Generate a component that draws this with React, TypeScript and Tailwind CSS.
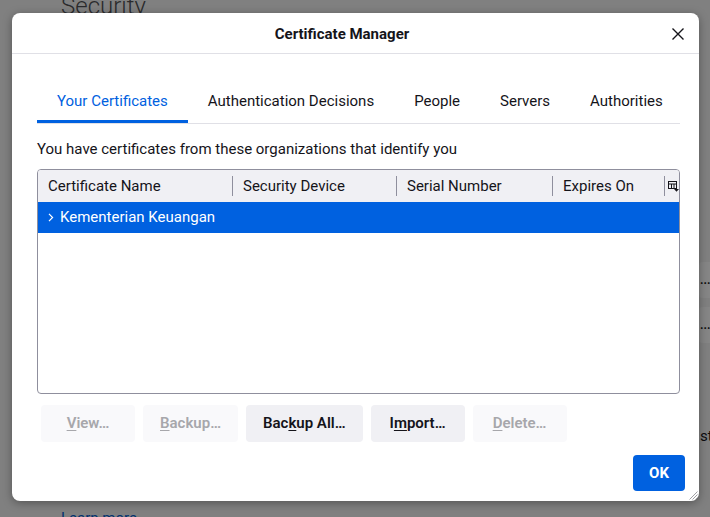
import { useState } from 'react'

const tabs = ['Your Certificates', 'Authentication Decisions', 'People', 'Servers', 'Authorities']

const columns = [
  { label: 'Certificate Name', width: 'w-[194px]' },
  { label: 'Security Device', width: 'w-[164px]' },
  { label: 'Serial Number', width: 'w-[156px]' },
  { label: 'Expires On', width: 'w-[112px]' },
]

function Key({ before, k, after }: { before: string; k: string; after: string }) {
  return (
    <span>
      {before}
      <span className="underline underline-offset-2">{k}</span>
      {after}
    </span>
  )
}

function ActionButton({ children, disabled }: { children: React.ReactNode; disabled?: boolean }) {
  return (
    <button
      disabled={disabled}
      className={
        disabled
          ? 'h-[37px] min-w-[94px] whitespace-nowrap rounded-[4px] bg-[#f9f9fb] px-[17px] text-[15px] font-semibold text-[#a7a7ab]'
          : 'h-[37px] min-w-[94px] whitespace-nowrap rounded-[4px] bg-[#f0f0f4] px-[17px] text-[15px] font-semibold text-[#15141a]'
      }
    >
      {children}
    </button>
  )
}

export default function App() {
  const [active, setActive] = useState(0)

  return (
    <div className="relative h-[517px] w-[710px] overflow-hidden bg-[#808080] font-['Roboto','Liberation_Sans',sans-serif] text-[#15141a]">
      {/* page behind the dialog */}
      <div className="flex flex-col pl-[61px]">
        <h2 className="-mt-[9px] text-[24px] font-light leading-[30px] text-[#2a2a2c]">Security</h2>
        <div className="mt-[241px] flex flex-col gap-[9px] pl-[638px]">
          <div className="flex h-[36px] w-[80px] items-center rounded-[4px] bg-[#868686] pl-[1px] text-[12px] font-bold leading-none text-[#101010]">...</div>
          <div className="flex h-[36px] w-[80px] items-center rounded-[4px] bg-[#868686] pl-[1px] text-[12px] font-bold leading-none text-[#101010]">...</div>
        </div>
        <div className="mt-[83px] pl-[639px] text-[15px] leading-[20px] text-[#0c0c0e]">st</div>
        <a className="mt-[62px] text-[15px] leading-[20px] text-[#00306f]">Learn more</a>
      </div>

      {/* dialog */}
      <div className="absolute left-[12px] top-[13px] flex h-[488px] w-[687px] flex-col rounded-[8px] bg-white shadow-[0_2px_10px_rgba(0,0,0,0.35)]">
        <div className="flex h-[41px] shrink-0 items-center border-b border-[#e0e0e6] pt-[2px]">
          <div className="flex-1 text-center text-[15px] font-bold">Certificate Manager</div>
          <button className="mr-[15px] flex h-[12px] w-[12px] items-center justify-center">
            <svg width="12" height="12" viewBox="0 0 12 12" fill="none" stroke="#15141a" strokeWidth="1.4">
              <path d="M0.5 0.5 L11.5 11.5 M11.5 0.5 L0.5 11.5" />
            </svg>
          </button>
        </div>

        <div className="flex flex-col pl-[25px] pr-[19px] pt-[27px]">
          <div className="flex border-b border-[#e0e0e6]">
            {tabs.map((t, i) => (
              <button
                key={t}
                onClick={() => setActive(i)}
                className={
                  i === active
                    ? 'h-[42px] shrink-0 whitespace-nowrap border-b-[3px] border-[#0061e0] px-[20px] pt-[2px] text-[15px] text-[#0061e0]'
                    : 'h-[42px] shrink-0 whitespace-nowrap border-b-[3px] border-transparent px-[20px] pt-[2px] text-[15px] text-[#15141a]'
                }
              >
                {t}
              </button>
            ))}
          </div>

          <p className="mt-[15px] text-[15px] leading-[20px]">You have certificates from these organizations that identify you</p>

          <div className="mt-[10px] h-[225px] overflow-hidden rounded-[4px] border border-[#8f8f9d]">
            <div className="flex h-[32px] items-center bg-[#f0f0f4]">
              {columns.map((c, i) => (
                <div key={c.label} className={`flex h-full shrink-0 items-center ${c.width}`}>
                  {i > 0 && <div className="mr-[10px] h-[20px] w-px bg-[#8f8f9d]" />}
                  <span className={i === 0 ? 'pl-[10px] text-[15px]' : 'text-[15px]'}>{c.label}</span>
                </div>
              ))}
              <div className="flex h-full flex-1 items-center">
                <div className="mr-[3px] h-[20px] w-px bg-[#8f8f9d]" />
                <svg width="11" height="11" viewBox="0 0 11 11" fill="none" stroke="#15141a" strokeWidth="1">
                  <rect x="0.5" y="0.5" width="8" height="7" />
                  <path d="M0.5 3 H8.5 M3.5 3 V7.5 M6 3 V7.5" />
                  <path d="M6 8 H11 L8.5 10.8 Z" fill="#15141a" stroke="none" />
                </svg>
              </div>
            </div>
            <div className="flex h-[31px] items-center bg-[#0061e0] pl-[10px] text-white">
              <svg width="6" height="9" viewBox="0 0 6 9" fill="none" stroke="white" strokeWidth="1.2">
                <path d="M1 0.8 L4.6 4.5 L1 8.2" />
              </svg>
              <span className="ml-[6px] text-[15px]">Kementerian Keuangan</span>
            </div>
          </div>

          <div className="ml-[4px] mt-[11px] flex gap-[8px]">
            <ActionButton disabled><Key before="" k="V" after="iew…" /></ActionButton>
            <ActionButton disabled><Key before="" k="B" after="ackup…" /></ActionButton>
            <ActionButton><Key before="Bac" k="k" after="up All…" /></ActionButton>
            <ActionButton><Key before="I" k="m" after="port…" /></ActionButton>
            <ActionButton disabled><Key before="" k="D" after="elete…" /></ActionButton>
          </div>
        </div>

        <div className="mt-[13px] flex justify-end pr-[14px]">
          <button className="h-[36px] w-[52px] rounded-[4px] bg-[#0061e0] text-[15px] font-bold text-white">OK</button>
        </div>

        <svg className="absolute bottom-[1px] right-[1px]" width="9" height="9" viewBox="0 0 9 9" stroke="#a0a0a4" strokeWidth="1">
          <path d="M8.5 0.5 L0.5 8.5 M8.5 3.5 L3.5 8.5 M8.5 6.5 L6.5 8.5" />
        </svg>
      </div>
    </div>
  )
}
